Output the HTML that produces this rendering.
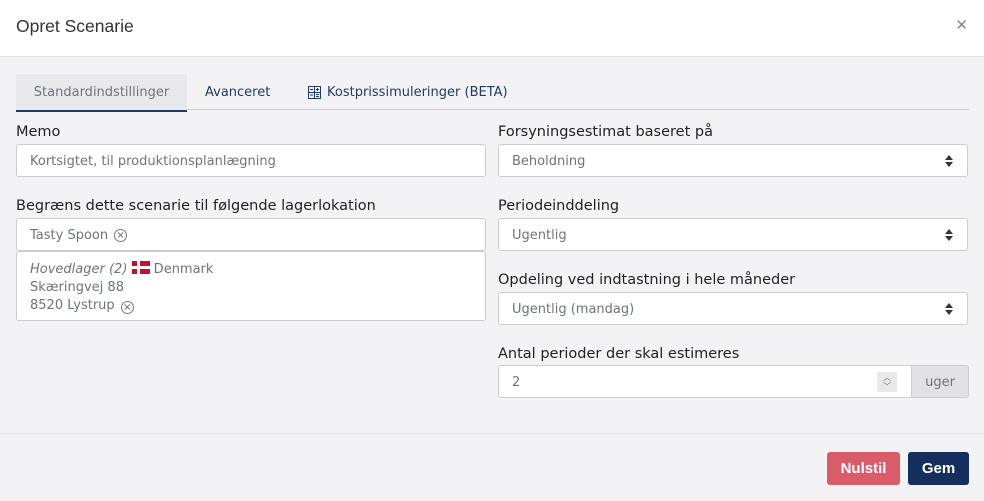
<!DOCTYPE html>
<html><head><meta charset="utf-8"><style>
*{box-sizing:border-box;margin:0;padding:0}
body{width:984px;height:501px;background:#f3f3f6;font-family:"DejaVu Sans","Liberation Sans",sans-serif;position:relative;overflow:hidden;color:#212529}
.hdr{position:absolute;left:0;top:0;width:984px;height:57px;background:#fff;border-bottom:1px solid #e3e3e8}
.hdr h1{position:absolute;left:16px;top:16px;font-size:17.5px;font-weight:normal;color:#333;font-family:"Liberation Sans",sans-serif}
.x{position:absolute;right:16px;top:16px;font-size:15px;color:#888}
.abs{position:absolute}
.lbl{position:absolute;font-size:14.5px;color:#222;margin-top:2px}
.inp{position:absolute;background:#fff;border:1px solid #ccc;border-radius:3px;font-size:13px;color:#6c757d;padding-left:13px;padding-top:2px;display:flex;align-items:center}
.sel::after{content:"";position:absolute;right:14px;top:50%;margin-top:-6px;border:4px solid transparent;border-bottom:5px solid #333;border-top:none}
.sel::before{content:"";position:absolute;right:14px;top:50%;margin-top:1px;border:4px solid transparent;border-top:5px solid #333;border-bottom:none}
.btn{position:absolute;height:33px;border-radius:3px;color:#fff;font-size:15px;font-weight:bold;font-family:"Liberation Sans",sans-serif;display:flex;align-items:center;justify-content:center}
.circ{display:inline-block;width:13px;height:13px;border:1px solid #777;border-radius:50%;font-size:10px;line-height:11px;text-align:center;color:#666;margin-left:6px;vertical-align:-1px}
</style></head><body>
<div class="hdr"><h1>Opret Scenarie</h1><div class="x">✕</div></div>
<div class="abs" style="left:16px;top:74px;width:171px;height:38px;background:#e9e9ec;border-bottom:2px solid #1e3a66;font-size:13px;color:#6c757d;text-align:center;line-height:38px">Standardindstillinger</div>
<div class="abs" style="left:187px;top:109px;width:782px;height:1px;background:#ccc"></div>
<div class="abs" style="left:205px;top:85px;font-size:13px;color:#1e3a66">Avanceret</div>
<svg class="abs" style="left:308px;top:86px" width="13" height="13" viewBox="0 0 13 13"><rect x="0.5" y="0.5" width="12" height="12" fill="none" stroke="#1e3a66"/><path d="M0.5 6.5H12.5M6.5 0.5V12.5M2 3.5H5M8 3.5H11M9.5 2V5M2 9H5M8 8.5H11M8 10.5H11" stroke="#1e3a66" stroke-width="1"/></svg>
<div class="abs" style="left:327px;top:85px;font-size:13px;color:#1e3a66">Kostprissimuleringer (BETA)</div>

<div class="lbl" style="left:16px;top:122px">Memo</div>
<div class="inp" style="left:16px;top:144px;width:470px;height:33px">Kortsigtet, til produktionsplanlægning</div>
<div class="lbl" style="left:16px;top:196px">Begræns dette scenarie til følgende lagerlokation</div>
<div class="inp" style="left:16px;top:218px;width:470px;height:33px">Tasty Spoon<span class="circ">×</span></div>
<div class="abs" style="left:16px;top:251px;width:470px;height:70px;background:#fff;border:1px solid #ccc;border-radius:3px;font-size:13px;color:#6c757d;padding:9px 13px 0;line-height:18px">
<i>Hovedlager (2)</i> <span style="display:inline-block;width:18px;height:13px;background:#c8102e;position:relative;vertical-align:-1px"><span style="position:absolute;left:5px;top:0;width:3px;height:13px;background:#fff"></span><span style="position:absolute;left:0;top:5px;width:18px;height:3px;background:#fff"></span></span> Denmark<br>Skæringvej 88<br>8520 Lystrup<span class="circ">×</span></div>

<div class="lbl" style="left:498px;top:122px">Forsyningsestimat baseret på</div>
<div class="inp sel" style="left:498px;top:144px;width:470px;height:33px">Beholdning</div>
<div class="lbl" style="left:498px;top:196px">Periodeinddeling</div>
<div class="inp sel" style="left:498px;top:218px;width:470px;height:33px">Ugentlig</div>
<div class="lbl" style="left:498px;top:270px">Opdeling ved indtastning i hele måneder</div>
<div class="inp sel" style="left:498px;top:292px;width:470px;height:33px">Ugentlig (mandag)</div>
<div class="lbl" style="left:498px;top:344px">Antal perioder der skal estimeres</div>
<div class="inp" style="left:498px;top:365px;width:414px;height:33px;border-radius:3px 0 0 3px">2
<div class="abs" style="right:14px;top:6px;width:20px;height:20px;background:#e9e9ec;font-size:8px;color:#666;text-align:center;line-height:9px;padding-top:1px">︿<br>﹀</div></div>
<div class="abs" style="left:911px;top:365px;width:58px;height:33px;background:#e2e2e6;border:1px solid #ccc;border-radius:0 3px 3px 0;font-size:13px;color:#6c757d;text-align:center;line-height:33px">uger</div>

<div class="abs" style="left:0;top:433px;width:984px;height:1px;background:#e3e3e8"></div>
<div class="btn" style="left:827px;top:452px;width:73px;background:#d95c68">Nulstil</div>
<div class="btn" style="left:908px;top:452px;width:61px;background:#142f5e">Gem</div>
</body></html>
